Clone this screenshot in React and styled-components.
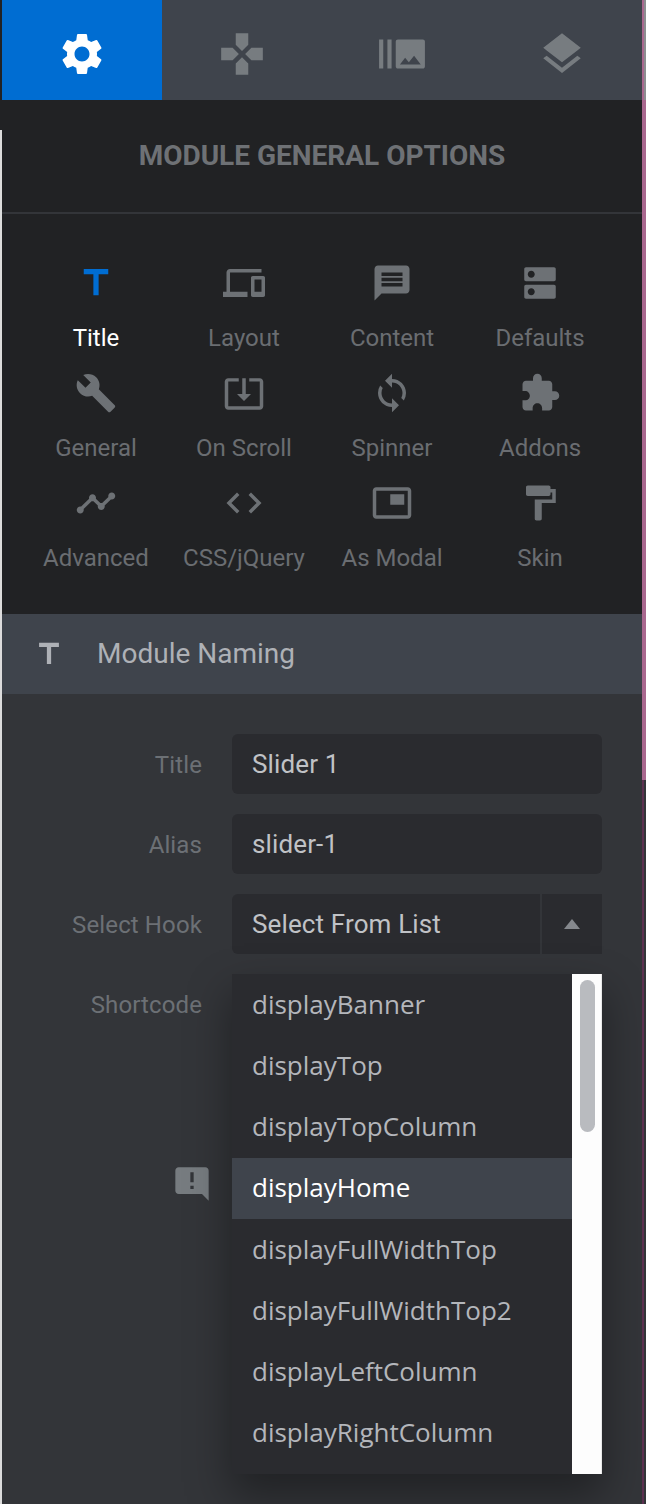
import React from 'react';
import styled, { createGlobalStyle } from 'styled-components';
import {
  MdSettings, MdGamepad, MdBurstMode, MdLayers, MdTitle, MdDevices, MdMessage, MdDns,
  MdBuild, MdSystemUpdateAlt, MdSync, MdExtension, MdTimeline, MdCode,
  MdPictureInPicture, MdFormatPaint, MdAnnouncement,
} from 'react-icons/md';

const GlobalStyle = createGlobalStyle`
  html, body {
    margin: 0;
    padding: 0;
    background: #333539;
    overflow: hidden;
  }
`

const Page = styled.div`
  display: grid;
  grid-template-columns: 2px 640px 4px;
  height: 1504px;
  overflow: hidden;
  font-family: 'Roboto', sans-serif;
`

const LeftEdge = styled.div`
  background: linear-gradient(to bottom, #212224 130px, #dcdcdc 130px);
`

const RightEdge = styled.div`
  background: linear-gradient(
    to right,
    #a9688f 0 2px,
    #8d8d91 2px 4px
  ) top / 100% 100px no-repeat,
  linear-gradient(
    to bottom,
    #a9688f 0 780px,
    #5c3150 780px
  ) left / 2px 100% no-repeat,
  linear-gradient(
    to bottom,
    #a9688f 0 780px,
    #333539 780px
  ) right / 2px 100% no-repeat;
`

const Panel = styled.div`
  display: flex;
  flex-direction: column;
  min-width: 0;
`

const Tabs = styled.div`
  display: grid;
  grid-template-columns: repeat(4, 160px);
  height: 100px;
  background: #3f444c;
`

const Tab = styled.div`
  display: flex;
  align-items: center;
  justify-content: center;
  padding-top: 8px;
  box-sizing: border-box;
  font-size: 50px;
  color: ${(props) => (props.$active ? '#ffffff' : '#777c80')};
  background: ${(props) => (props.$active ? '#006dd2' : 'transparent')};
`

const OptionsPanel = styled.div`
  background: #212224;
  height: 514px;
`

const OptionsTitle = styled.h2`
  margin: 0;
  height: 110px;
  padding-bottom: 2px;
  border-bottom: 2px solid #333539;
  display: flex;
  align-items: center;
  justify-content: center;
  font-size: 28px;
  font-weight: 700;
  color: #6e7175;
`

const OptionGrid = styled.div`
  display: grid;
  grid-template-columns: repeat(4, 148px);
  grid-auto-rows: 110px;
  padding: 45px 0 0 20px;
`

const Option = styled.div`
  display: flex;
  flex-direction: column;
  align-items: center;
  color: ${(props) => (props.$active ? '#ffffff' : '#6a6d71')};
  font-size: 24px;
  line-height: 28px;
`

const OptionIcon = styled.span`
  display: flex;
  height: 48px;
  margin-bottom: 17px;
  font-size: 42px;
  align-items: center;
  color: ${(props) => (props.$active ? '#006dd2' : '#6d7175')};
`

const SectionHeader = styled.div`
  display: flex;
  align-items: center;
  height: 80px;
  padding: 0 0 1px 30px;
  background: #3f444c;
  color: #aeb1b6;
  font-size: 28px;
  font-weight: 400;
  box-sizing: border-box;
`

const SectionIcon = styled.span`
  display: flex;
  font-size: 34px;
  width: 65px;
`

const Form = styled.div`
  position: relative;
  flex: 1;
  display: flex;
  flex-direction: column;
  gap: 20px;
  padding-top: 40px;
  background: #333539;
`

const Row = styled.div`
  display: grid;
  grid-template-columns: 200px 370px;
  column-gap: 30px;
  align-items: center;
  height: 60px;
`

const Label = styled.label`
  padding-top: 2px;
  text-align: right;
  color: #6c7075;
  font-size: 24px;
  letter-spacing: 0.12px;
`

const Field = styled.div`
  display: flex;
  align-items: center;
  height: 60px;
  padding-left: 20px;
  box-sizing: border-box;
  border-radius: 6px;
  background: #2a2b2f;
  color: #c0c2c6;
  font-size: 26px;
  letter-spacing: 0.13px;
`

const SelectField = styled(Field)`
  justify-content: space-between;
  border-radius: 6px 0 0 6px;
`

const Caret = styled.span`
  display: flex;
  align-items: center;
  justify-content: center;
  width: 62px;
  height: 100%;
  border-left: 2px solid #333539;
  box-sizing: border-box;

  &::after {
    content: '';
    border-left: 8px solid transparent;
    border-right: 8px solid transparent;
    border-bottom: 10px solid #85888d;
  }
`

const NoteIcon = styled.span`
  display: flex;
  font-size: 40px;
  color: #777c80;
  margin: 110px 0 0 170px;
  width: 40px;
  transform: scaleX(-1);
`

const Dropdown = styled.div`
  position: absolute;
  top: 280px;
  left: 230px;
  width: 370px;
  height: 500px;
  display: flex;
  background: #2a2b2f;
  box-shadow: 0 20px 40px 2px rgba(0, 0, 0, 0.36);
`

const HookList = styled.ul`
  flex: 1;
  margin: 0;
  padding: 0;
  list-style: none;
  font-family: 'Open Sans', sans-serif;
  font-size: 26px;
`

const Hook = styled.li`
  display: flex;
  align-items: center;
  box-sizing: border-box;
  height: 61.25px;
  padding: 0 0 2px 20px;
  color: ${(props) => (props.$active ? '#ffffff' : '#b4b6bb')};
  background: ${(props) => (props.$active ? '#3f444c' : 'transparent')};
`

const ScrollTrack = styled.div`
  width: 30px;
  box-sizing: border-box;
  padding: 6px 6px 0 8px;
  background: #fdfdfd;
  border-right: 1px solid #e8e8e8;
`

const ScrollThumb = styled.div`
  height: 152px;
  border-radius: 8px;
  background: #b9bbbf;
`

const tabs = [MdSettings, MdGamepad, MdBurstMode, MdLayers]

const options = [
  ['Title', MdTitle],
  ['Layout', MdDevices],
  ['Content', MdMessage],
  ['Defaults', MdDns],
  ['General', MdBuild],
  ['On Scroll', MdSystemUpdateAlt],
  ['Spinner', MdSync],
  ['Addons', MdExtension],
  ['Advanced', MdTimeline],
  ['CSS/jQuery', MdCode],
  ['As Modal', MdPictureInPicture],
  ['Skin', MdFormatPaint],
]

const hooks = [
  'displayBanner',
  'displayTop',
  'displayTopColumn',
  'displayHome',
  'displayFullWidthTop',
  'displayFullWidthTop2',
  'displayLeftColumn',
  'displayRightColumn',
]

export default function App() {
  return (
    <Page>
      <GlobalStyle />
      <LeftEdge />
      <Panel>
        <Tabs>
          {tabs.map((Icon, i) => (
            <Tab key={i} $active={i === 0}><Icon /></Tab>
          ))}
        </Tabs>
        <OptionsPanel>
          <OptionsTitle>MODULE GENERAL OPTIONS</OptionsTitle>
          <OptionGrid>
            {options.map(([name, Icon], i) => (
              <Option key={name} $active={i === 0}>
                <OptionIcon $active={i === 0}><Icon /></OptionIcon>
                {name}
              </Option>
            ))}
          </OptionGrid>
        </OptionsPanel>
        <SectionHeader>
          <SectionIcon><MdTitle /></SectionIcon>
          Module Naming
        </SectionHeader>
        <Form>
          <Row>
            <Label>Title</Label>
            <Field>Slider 1</Field>
          </Row>
          <Row>
            <Label>Alias</Label>
            <Field>slider-1</Field>
          </Row>
          <Row>
            <Label>Select Hook</Label>
            <SelectField>Select From List<Caret /></SelectField>
          </Row>
          <Row>
            <Label>Shortcode</Label>
          </Row>
          <NoteIcon><MdAnnouncement /></NoteIcon>
          <Dropdown>
            <HookList>
              {hooks.map((hook) => (
                <Hook key={hook} $active={hook === 'displayHome'}>{hook}</Hook>
              ))}
            </HookList>
            <ScrollTrack><ScrollThumb /></ScrollTrack>
          </Dropdown>
        </Form>
      </Panel>
      <RightEdge />
    </Page>
  )
}
